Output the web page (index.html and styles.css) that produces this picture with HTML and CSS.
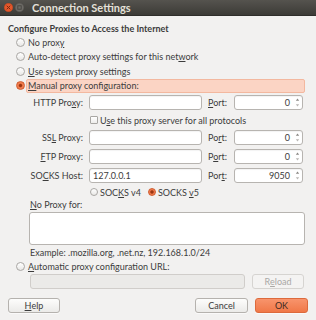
FILE: index.html
```html
<!DOCTYPE html>
<html lang="en">
<head>
<meta charset="utf-8">
<title>Connection Settings</title>
<link rel="stylesheet" href="styles.css">
</head>
<body>
<div class="window">
  <header class="titlebar">
    <span class="wm-buttons">
      <svg class="wm-btn" width="9" height="9" viewBox="0 0 9 9"><circle cx="4.5" cy="4.5" r="4.3" fill="#e4572b" stroke="#c2461f" stroke-width="0.5"/><path d="M3 3L6 6M6 3L3 6" stroke="#7a2a12" stroke-width="1" stroke-linecap="round"/></svg>
      <svg class="wm-btn" width="9" height="9" viewBox="0 0 9 9"><circle cx="4.5" cy="4.5" r="4.3" fill="#6e6c67" stroke="#5b5955" stroke-width="0.5"/><rect x="2.8" y="2.8" width="3.4" height="3.4" fill="none" stroke="#45443f" stroke-width="0.9"/></svg>
    </span>
    <span class="title">Connection Settings</span>
  </header>

  <div class="content">
    <h1 class="heading">Configure Proxies to Access the Internet</h1>
    <div class="choices">
      <div class="choice"><span class="radio"></span><span class="choice-label">No prox<u>y</u></span></div>
      <div class="choice"><span class="radio"></span><span class="choice-label">Auto-detect proxy settings for this net<u>w</u>ork</span></div>
      <div class="choice"><span class="radio"></span><span class="choice-label"><u>U</u>se system proxy settings</span></div>
      <div class="choice selected"><span class="radio checked"></span><span class="choice-label"><u>M</u>anual proxy configuration:</span></div>
    </div>

    <div class="manual">
      <span class="field-label">HTTP Pro<u>x</u>y:</span>
      <span class="entry"></span>
      <span class="port-label"><u>P</u>ort:</span>
      <span class="entry spin"><span class="spin-value">0</span><svg class="spin-arrows" width="5" height="11" viewBox="0 0 5 11"><path d="M2.5 1.5L4.2 3.8H0.8Z" fill="#8a8885"/><path d="M2.5 9.5L4.2 7.2H0.8Z" fill="#b9b7b4"/></svg></span>

      <span class="check-row"><span class="checkbox"></span><span>U<u>s</u>e this proxy server for all protocols</span></span>

      <span class="field-label">SS<u>L</u> Proxy:</span>
      <span class="entry"></span>
      <span class="port-label">Po<u>r</u>t:</span>
      <span class="entry spin"><span class="spin-value">0</span><svg class="spin-arrows" width="5" height="11" viewBox="0 0 5 11"><path d="M2.5 1.5L4.2 3.8H0.8Z" fill="#8a8885"/><path d="M2.5 9.5L4.2 7.2H0.8Z" fill="#b9b7b4"/></svg></span>

      <span class="field-label"><u>F</u>TP Proxy:</span>
      <span class="entry"></span>
      <span class="port-label">P<u>o</u>rt:</span>
      <span class="entry spin"><span class="spin-value">0</span><svg class="spin-arrows" width="5" height="11" viewBox="0 0 5 11"><path d="M2.5 1.5L4.2 3.8H0.8Z" fill="#8a8885"/><path d="M2.5 9.5L4.2 7.2H0.8Z" fill="#b9b7b4"/></svg></span>

      <span class="field-label">SO<u>C</u>KS Host:</span>
      <span class="entry"><span class="entry-text">127.0.0.1</span></span>
      <span class="port-label">Por<u>t</u>:</span>
      <span class="entry spin"><span class="spin-value">9050</span><svg class="spin-arrows" width="5" height="11" viewBox="0 0 5 11"><path d="M2.5 1.5L4.2 3.8H0.8Z" fill="#8a8885"/><path d="M2.5 9.5L4.2 7.2H0.8Z" fill="#b9b7b4"/></svg></span>

      <span class="socks-row">
        <span class="socks-item"><span class="radio small"></span><span>SOC<u>K</u>S v4</span></span>
        <span class="socks-item"><span class="radio small checked"></span><span>SOCKS <u>v</u>5</span></span>
      </span>
    </div>

    <div class="no-proxy">
      <div class="np-label"><u>N</u>o Proxy for:</div>
      <div class="textarea"></div>
      <div class="example">Example: .mozilla.org, .net.nz, 192.168.1.0/24</div>
    </div>

    <div class="choice auto"><span class="radio"></span><span class="choice-label"><u>A</u>utomatic proxy configuration URL:</span></div>
    <div class="url-row">
      <span class="entry disabled"></span>
      <span class="button disabled">R<u>e</u>load</span>
    </div>
  </div>

  <footer class="actions">
    <span class="button help"><u>H</u>elp</span>
    <span class="spacer"></span>
    <span class="button">Cancel</span>
    <span class="button default">OK</span>
  </footer>
</div>
</body>
</html>
```

FILE: styles.css
```css
html, body {
  margin: 0;
  padding: 0;
}

body {
  background: #f2f1f0;
  font-family: Lato, "Open Sans", "Noto Sans", sans-serif;
  font-size: 9px;
  color: #3c3c3c;
}

u {
  text-decoration: underline;
  text-decoration-thickness: 1px;
  text-underline-offset: 1px;
}

.window {
  width: 316px;
  height: 320px;
  display: flex;
  flex-direction: column;
  overflow: hidden;
}

/* Title bar */
.titlebar {
  height: 16px;
  box-sizing: border-box;
  display: flex;
  align-items: center;
  padding-left: 4px;
  background: linear-gradient(#55534e, #3c3b37);
  border-bottom: 1px solid #2f2e2b;
}

.wm-buttons {
  display: flex;
  gap: 2px;
}

.wm-btn {
  display: block;
}

.title {
  margin-left: 8px;
  font-weight: bold;
  font-size: 11px;
  color: #e4e0d8;
  line-height: 15px;
}

/* Content */
.content {
  padding: 7px 11px 0 8px;
  display: flex;
  flex-direction: column;
}

.heading {
  margin: 0;
  font-size: 9px;
  font-weight: bold;
  line-height: 12px;
  height: 12px;
}

.choices {
  display: flex;
  flex-direction: column;
}

.choice {
  height: 14.5px;
  display: flex;
  align-items: center;
  padding-left: 8px;
  gap: 1px;
}

.choice-label {
  flex: 1;
  height: 14px;
  box-sizing: border-box;
  display: flex;
  align-items: center;
  border: 1px solid transparent;
  border-radius: 2px;
  padding-left: 1px;
  white-space: nowrap;
}

.choice.selected .choice-label {
  background: #fbd4c4;
  border-color: #f3b89f;
}

.radio {
  flex: none;
  width: 9px;
  height: 9px;
  box-sizing: border-box;
  border-radius: 50%;
  border: 1px solid #a9a7a4;
  background: linear-gradient(#ffffff, #e9e8e6);
}

.radio.checked {
  border-color: #cf5a2c;
  background: radial-gradient(circle, #9a3612 0, #9a3612 1.2px, #f0794a 2.2px, #f58b60 100%);
}

/* Manual configuration grid */
.manual {
  margin-top: 2px;
  display: grid;
  grid-template-columns: 75px 113px 20px 69px;
  column-gap: 6px;
  row-gap: 4px;
  align-items: center;
}

.field-label {
  text-align: right;
  white-space: nowrap;
}

.port-label {
  white-space: nowrap;
}

.entry {
  height: 15px;
  box-sizing: border-box;
  border: 1px solid #b7b4b0;
  border-radius: 3px;
  background: #ffffff;
  box-shadow: inset 0 1px 1px rgba(0, 0, 0, 0.05);
  display: flex;
  align-items: center;
}

.entry-text {
  padding-left: 3px;
}

.spin {
  justify-content: flex-end;
}

.spin-value {
  padding-right: 5px;
}

.spin-arrows {
  display: block;
  margin-right: 2px;
}

.check-row {
  grid-column: 2 / -1;
  height: 12px;
  display: flex;
  align-items: center;
  gap: 2px;
  padding-left: 1px;
  white-space: nowrap;
}

.checkbox {
  width: 8px;
  height: 8px;
  box-sizing: border-box;
  border: 1px solid #a9a7a4;
  border-radius: 1px;
  background: linear-gradient(#ffffff, #eeedeb);
}

.socks-row {
  grid-column: 2 / -1;
  height: 10px;
  display: flex;
  align-items: center;
  gap: 7px;
  padding-left: 1px;
  white-space: nowrap;
}

.socks-item {
  display: flex;
  align-items: center;
  gap: 2px;
}

.radio.small {
  width: 8px;
  height: 8px;
}

/* No proxy */
.no-proxy {
  margin-left: 21px;
  margin-top: 2px;
  display: flex;
  flex-direction: column;
}

.np-label {
  line-height: 12px;
  padding-left: 1px;
}

.textarea {
  margin-top: 1px;
  height: 33px;
  box-sizing: border-box;
  border: 1px solid #b7b4b0;
  border-radius: 3px;
  background: #ffffff;
}

.example {
  margin-top: 1px;
  line-height: 14px;
  padding-left: 1px;
}

.choice.auto {
  height: 13px;
}

.url-row {
  margin-top: 1px;
  margin-left: 22px;
  margin-right: 1px;
  display: flex;
  gap: 7px;
}

.url-row .entry {
  flex: 1;
}

.entry.disabled {
  background: #ebeae8;
  border-color: #d0cdca;
  box-shadow: none;
}

/* Buttons */
.button {
  height: 15px;
  box-sizing: border-box;
  width: 53px;
  display: flex;
  align-items: center;
  justify-content: center;
  border: 1px solid #b5b2ae;
  border-radius: 3px;
  background: linear-gradient(#fdfdfc, #ebeae8);
  box-shadow: 0 1px 0 rgba(255, 255, 255, 0.6);
  white-space: nowrap;
}

.button.disabled {
  width: 52px;
  color: #aaa8a5;
  border-color: #d6d4d1;
  background: #f4f3f2;
  box-shadow: none;
}

.button.help {
  width: 52px;
}

.button.default {
  background: linear-gradient(#f8946c, #f07848);
  border-color: #dd6a3c;
  color: #3c2a22;
}

.actions {
  margin-top: auto;
  padding: 0 8px 7px 8px;
  display: flex;
  gap: 7px;
}

.spacer {
  flex: 1;
}
```
